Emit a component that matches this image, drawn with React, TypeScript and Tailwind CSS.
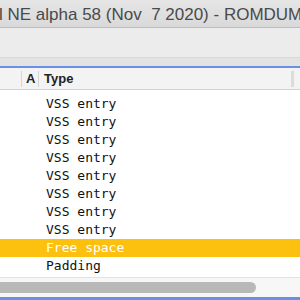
import React from "react";

const rows = [
  "VSS entry","VSS entry","VSS entry","VSS entry","VSS entry","VSS entry","VSS entry","VSS entry","Free space","Padding",
];

export default function App() {
  return (
    <div className="w-[300px] h-[300px] overflow-hidden bg-white flex flex-col" style={{ fontFamily: "'Liberation Sans', Arial, sans-serif" }}>
      <div className="h-[28px] shrink-0 bg-gradient-to-b from-[#e6e6e6] to-[#d9d9d9] border-b border-[#bdbdbd] flex items-center overflow-hidden">
        <span className="whitespace-pre text-[17px] text-[#4a4a4a] ml-[-1px] leading-none pt-[1px]">l NE alpha 58 (Nov  7 2020) - ROMDUMPER</span>
      </div>
      <div className="h-[30px] shrink-0 bg-[#ececec] border-b border-[#d8d8d8]" />
      <div className="h-[8px] shrink-0 bg-[#e3e3e3]" />
      <div className="h-[2px] shrink-0 bg-[#6b8fe3]" />
      <div className="h-[22px] shrink-0 bg-[#f3f3f3] border-b border-[#d3d3d3] flex items-center text-[13px] font-bold text-[#222]">
        <div className="w-[22px] h-[16px] border-r border-[#d6d6d6]" />
        <div className="w-[17px] h-[16px] border-r border-[#d6d6d6] flex items-center pl-[4px]">A</div>
        <div className="flex-1 pl-[5px]">Type</div>
        <div className="w-[6px] h-[16px] border-l-[3px] border-[#dcdcdc] mr-[3px]" />
      </div>
      <div className="flex flex-col pt-[5px] text-[13px]" style={{ fontFamily: "'DejaVu Sans Mono', 'Liberation Mono', monospace" }}>
        {rows.map((r, i) => (
          <div key={i} className={`h-[18px] flex items-center pl-[46px] ${r === "Free space" ? "bg-[#fcc10e] text-white" : "text-[#111]"}`}>
            {r}
          </div>
        ))}
      </div>
      <div className="mt-[2px] h-[1px] bg-[#e3e3e3] shrink-0" />
      <div className="flex-1 bg-[#f7f7f7] flex items-start pt-[4px]">
        <div className="w-[262px] h-[11px] rounded-full bg-[#b8b8b8] ml-[-6px]" />
      </div>
      <div className="h-[3px] shrink-0 bg-[#6b8fe3]" />
    </div>
  );
}
